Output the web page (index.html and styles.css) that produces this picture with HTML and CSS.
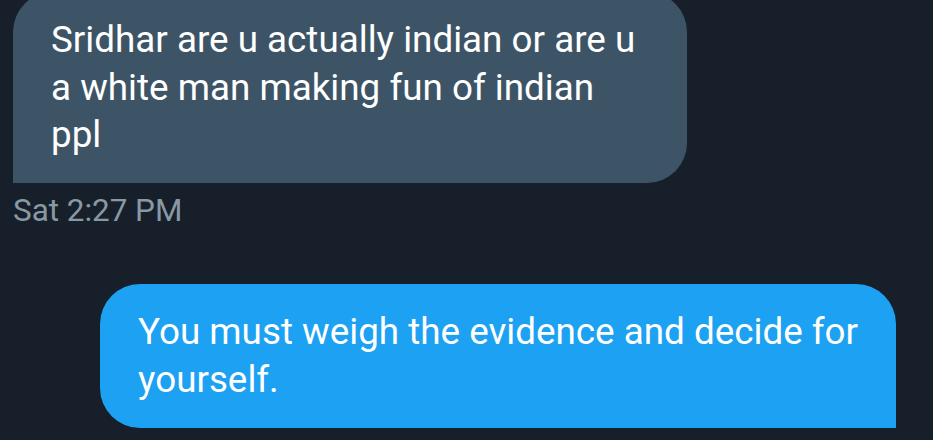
FILE: index.html
```html
<!DOCTYPE html>
<html>
<head>
<meta charset="utf-8">
<link rel="stylesheet" href="styles.css">
</head>
<body>
<div class="thread">
  <div class="msg msg-in">
    <div class="bubble bubble-in">Sridhar are u actually indian or are u<br>a white man making fun of indian<br>ppl</div>
    <div class="time">Sat 2:27 PM</div>
  </div>
  <div class="msg msg-out">
    <div class="bubble bubble-out">You must weigh the evidence and decide for<br>yourself.</div>
  </div>
</div>
</body>
</html>
```

FILE: styles.css
```css
html, body {
  margin: 0;
  padding: 0;
  background: #17202a;
  height: 100%;
  overflow: hidden;
}
body {
  font-family: Roboto, "Liberation Sans", sans-serif;
}
.thread {
  display: flex;
  flex-direction: column;
}
.msg-in {
  display: flex;
  flex-direction: column;
  align-items: flex-start;
  padding-left: 13px;
  margin-top: -8px;
}
.bubble {
  font-size: 36.8px;
  line-height: 47.5px;
  color: #ffffff;
  padding: 24px 38px 24.5px 38px;
  box-sizing: border-box;
  white-space: nowrap;
}
.bubble-in {
  width: 674px;
  background: #3d5466;
  border-radius: 40px 40px 40px 0;
}
.time {
  margin-top: 10px;
  font-size: 31.4px;
  line-height: 36px;
  color: #8899a6;
}
.msg-out {
  display: flex;
  padding-left: 100px;
  margin-top: 55px;
}
.bubble-out {
  width: 796px;
  background: #1da1f2;
  border-radius: 40px 40px 0 40px;
}
```
